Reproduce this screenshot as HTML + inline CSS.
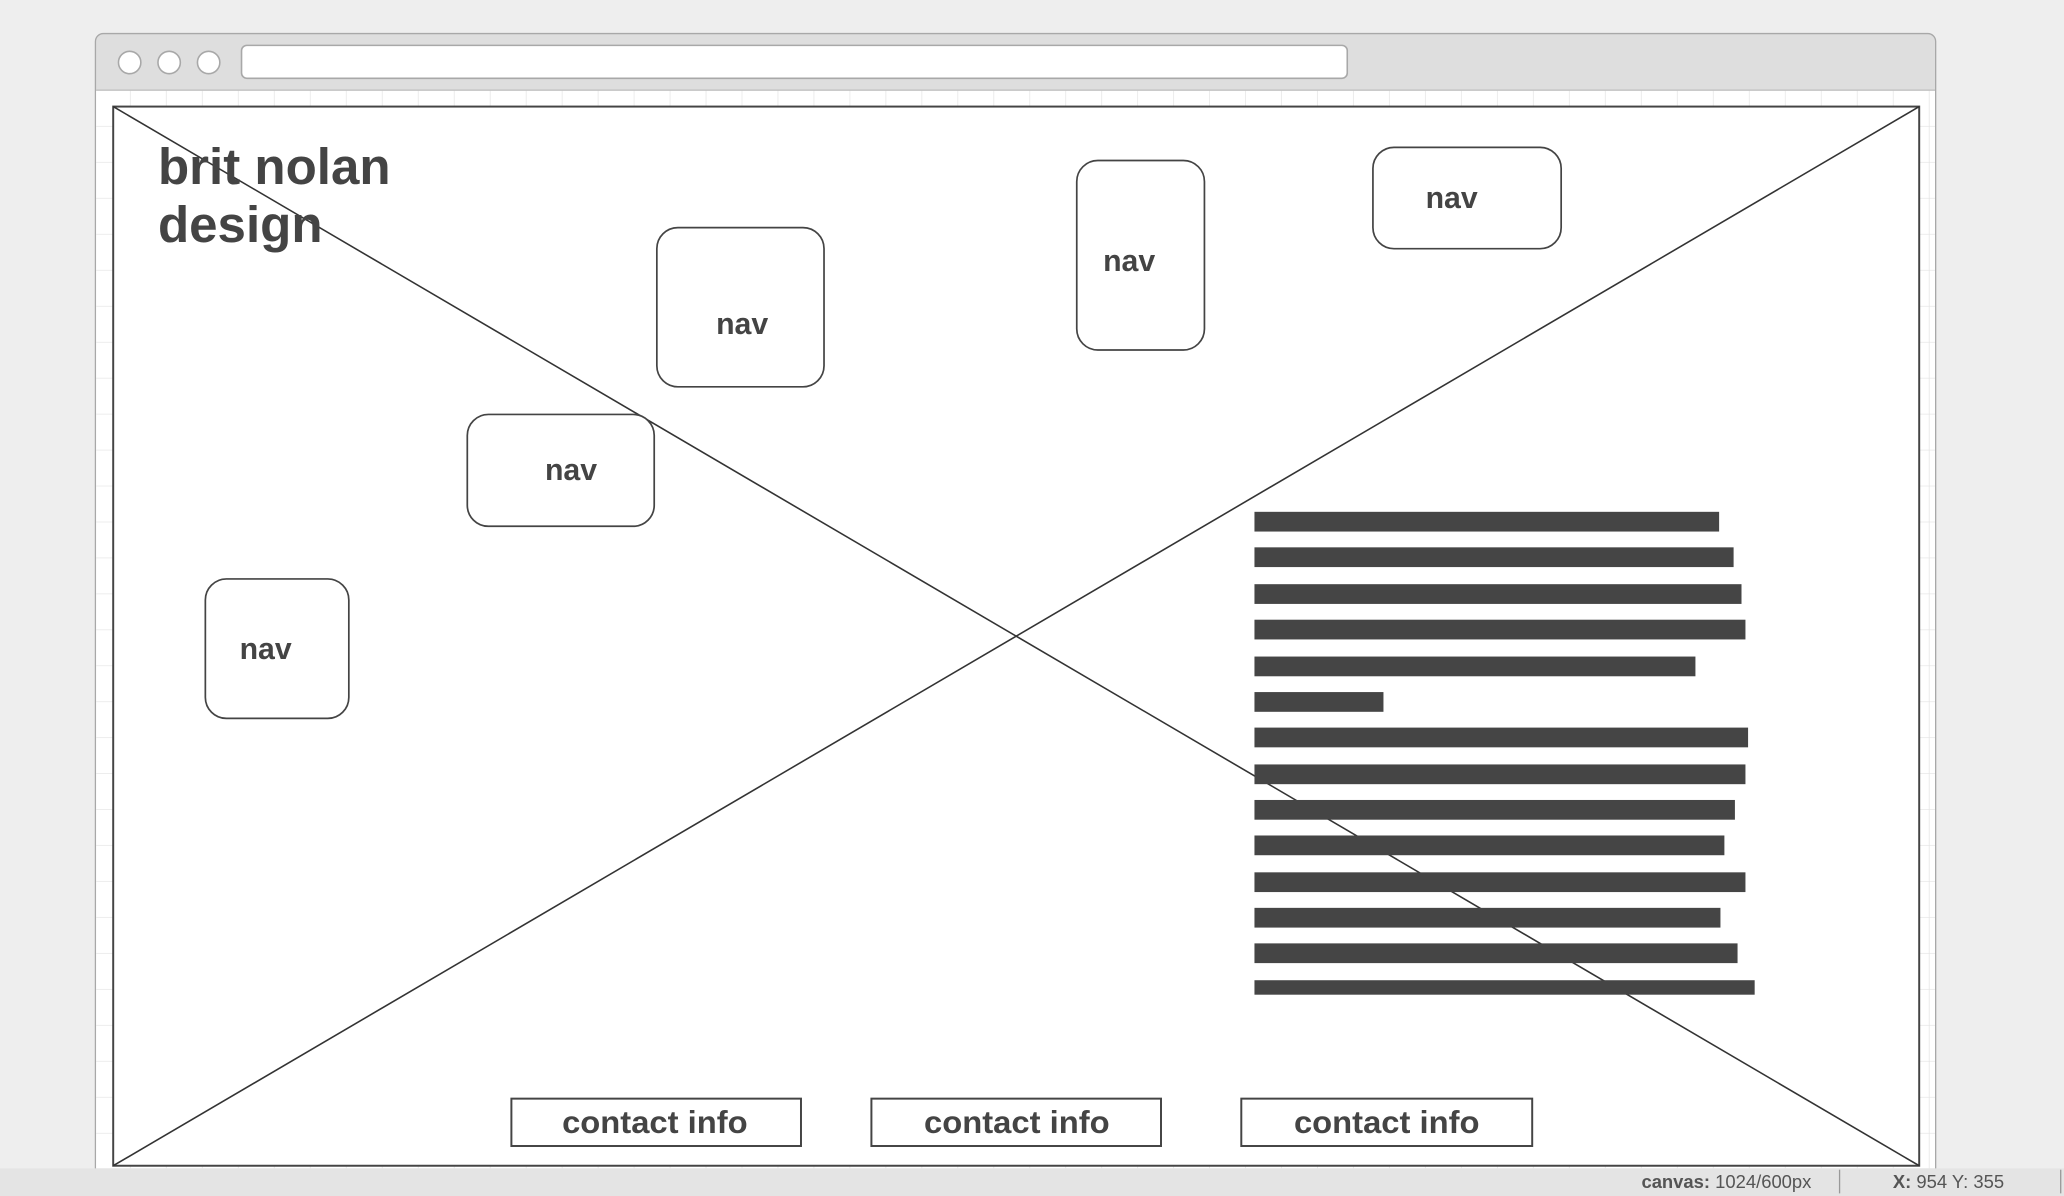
<!DOCTYPE html>
<html><head><meta charset="utf-8"><style>
html,body{margin:0;padding:0;background:#eeeeee;}
svg{display:block;width:2064px;height:1196px;}
text{font-family:"Liberation Sans",Arial,sans-serif;font-weight:bold;fill:#444;}
</style></head><body>
<svg viewBox="0 0 1568 909" xmlns="http://www.w3.org/2000/svg" preserveAspectRatio="none">
<defs>
<pattern id="g" x="72" y="69" width="27.33" height="27.33" patternUnits="userSpaceOnUse">
<path d="M27.33 0V27.33M0 27.33H27.33" stroke="#e2e2e2" stroke-width="1" fill="none"/>
</pattern>
</defs>
<rect width="1568" height="909" fill="#eeeeee"/>
<rect x="72.5" y="25.5" width="1398" height="870" rx="6" fill="#dedede" stroke="#a8a8a8"/>
<rect x="73" y="68" width="1397" height="820" fill="#fff"/>
<rect x="73" y="68" width="1397" height="820" fill="url(#g)"/>
<line x1="73" y1="68.5" x2="1470" y2="68.5" stroke="#bdbdbd"/>
<circle cx="98.5" cy="47.5" r="8.5" fill="#fff" stroke="#a8a8a8" stroke-width="1.2"/>
<circle cx="128.5" cy="47.5" r="8.5" fill="#fff" stroke="#a8a8a8" stroke-width="1.2"/>
<circle cx="158.5" cy="47.5" r="8.5" fill="#fff" stroke="#a8a8a8" stroke-width="1.2"/>
<rect x="183.5" y="34.5" width="840" height="25" rx="4" fill="#fff" stroke="#a8a8a8" stroke-width="1.2"/>
<rect x="0" y="888" width="1568" height="21" fill="#e4e4e4"/>
<text x="1247" y="903" style="font-size:14px;fill:#555">canvas: <tspan style="font-weight:normal">1024/600px</tspan></text>
<line x1="1397.5" y1="889" x2="1397.5" y2="907" stroke="#999"/>
<text x="1438" y="903" style="font-size:14px;fill:#555">X: <tspan style="font-weight:normal">954 Y: 355</tspan></text>
<line x1="1565.5" y1="889" x2="1565.5" y2="907" stroke="#999"/>
<rect x="86" y="81" width="1372" height="805" fill="#fff" stroke="#444" stroke-width="1.5"/>
<line x1="86" y1="81" x2="1458" y2="886" stroke="#333" stroke-width="1.2"/>
<line x1="86" y1="886" x2="1458" y2="81" stroke="#333" stroke-width="1.2"/>
<text x="120" y="140" style="font-size:38.8px">brit nolan</text>
<text x="120" y="184" style="font-size:38.8px">design</text>
<g fill="#fff" stroke="#444" stroke-width="1.3">
<rect x="499" y="173" width="127" height="121" rx="16"/>
<rect x="818" y="122" width="97" height="144" rx="16"/>
<rect x="1043" y="112" width="143" height="77" rx="16"/>
<rect x="355" y="315" width="142" height="85" rx="16"/>
<rect x="156" y="440" width="109" height="106" rx="16"/>
</g>
<g style="font-size:23px">
<text x="544" y="254">nav</text>
<text x="838" y="206">nav</text>
<text x="1083" y="158">nav</text>
<text x="414" y="365">nav</text>
<text x="182" y="501">nav</text>
</g>
<g fill="#454545">
<rect x="953" y="389" width="353" height="15"/>
<rect x="953" y="416" width="364" height="15"/>
<rect x="953" y="444" width="370" height="15"/>
<rect x="953" y="471" width="373" height="15"/>
<rect x="953" y="499" width="335" height="15"/>
<rect x="953" y="526" width="98" height="15"/>
<rect x="953" y="553" width="375" height="15"/>
<rect x="953" y="581" width="373" height="15"/>
<rect x="953" y="608" width="365" height="15"/>
<rect x="953" y="635" width="357" height="15"/>
<rect x="953" y="663" width="373" height="15"/>
<rect x="953" y="690" width="354" height="15"/>
<rect x="953" y="717" width="367" height="15"/>
<rect x="953" y="745" width="380" height="11"/>
</g>
<g fill="#fff" stroke="#444" stroke-width="1.5">
<rect x="388.5" y="835" width="220" height="36"/>
<rect x="662" y="835" width="220" height="36"/>
<rect x="943" y="835" width="221" height="36"/>
</g>
<g style="font-size:24px">
<text x="427" y="861" textLength="141" lengthAdjust="spacingAndGlyphs">contact info</text>
<text x="702" y="861" textLength="141" lengthAdjust="spacingAndGlyphs">contact info</text>
<text x="983" y="861" textLength="141" lengthAdjust="spacingAndGlyphs">contact info</text>
</g>
</svg>
</body></html>
